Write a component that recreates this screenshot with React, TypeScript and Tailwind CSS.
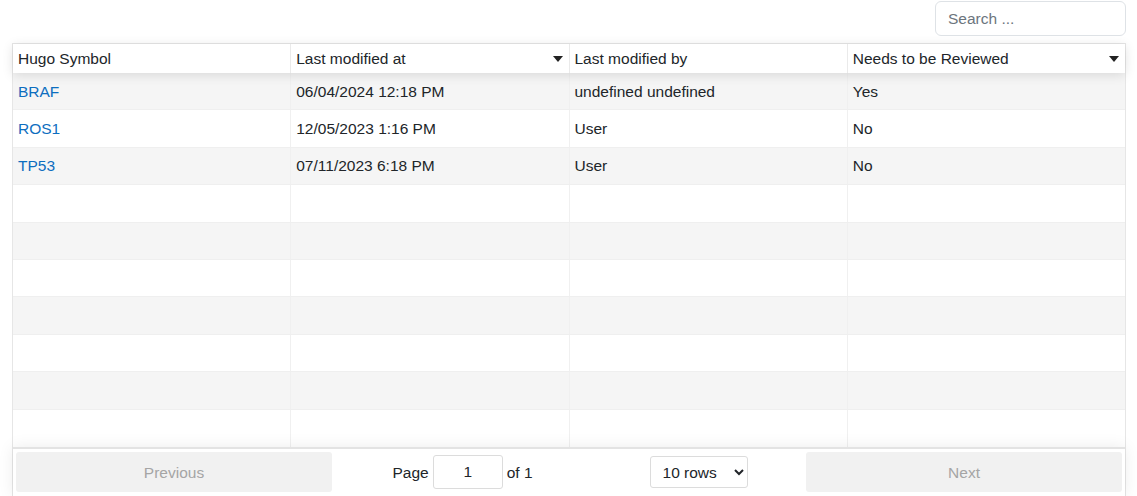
import React from 'react'

const rows = [
  { symbol: 'BRAF', at: '06/04/2024 12:18 PM', by: 'undefined undefined', review: 'Yes' },
  { symbol: 'ROS1', at: '12/05/2023 1:16 PM', by: 'User', review: 'No' },
  { symbol: 'TP53', at: '07/11/2023 6:18 PM', by: 'User', review: 'No' },
]

const columns = [
  { label: 'Hugo Symbol', sorted: false },
  { label: 'Last modified at', sorted: true },
  { label: 'Last modified by', sorted: false },
  { label: 'Needs to be Reviewed', sorted: true },
]

function Caret() {
  return (
    <svg width="10" height="6" viewBox="0 0 10 6" className="shrink-0">
      <path d="M0 0h10L5 6z" fill="#222" />
    </svg>
  )
}

export default function App() {
  const padded = Array.from({ length: 10 }, (_, i) => rows[i] ?? null)

  return (
    <div className="w-[1137px] h-[496px] bg-white text-[15.5px] text-[#212529] [font-family:'Liberation_Sans',Arial,sans-serif]">
      {/* search */}
      <div className="flex justify-end pr-[11px] pt-px h-[43px]">
        <input
          type="text"
          placeholder="Search ..."
          className="w-[191px] h-[35px] px-3 rounded-md border border-[#dee2e6] text-[15.5px] outline-none placeholder:text-[#6c757d]"
        />
      </div>

      {/* table */}
      <div className="mx-3 w-[1114px] border border-[#e6e6e6] flex flex-col">
        <div className="flex h-[29px] shadow-[0_2px_12px_rgba(0,0,0,0.12)] relative z-10 bg-white">
          {columns.map((c, i) => (
            <div
              key={c.label}
              className={`flex-1 flex items-center justify-between px-[5px] pr-[6px] pt-px ${i < 3 ? 'border-r border-[#eaeaea]' : ''}`}
            >
              <span>{c.label}</span>
              {c.sorted && <Caret />}
            </div>
          ))}
        </div>

        <div className="flex flex-col">
          {padded.map((r, idx) => (
            <div
              key={idx}
              className={`flex h-[37.4px] border-b border-[#efefef] last:border-b-0 ${idx % 2 === 0 ? 'bg-[#f5f5f5]' : 'bg-white'}`}
            >
              {[0, 1, 2, 3].map((ci) => (
                <div
                  key={ci}
                  className={`flex-1 flex items-center px-[5px] ${ci < 3 ? 'border-r border-[#f0f0f0]' : ''}`}
                >
                  {r && ci === 0 && <a className="text-[#0d6ebf] cursor-pointer">{r.symbol}</a>}
                  {r && ci === 1 && <span>{r.at}</span>}
                  {r && ci === 2 && <span>{r.by}</span>}
                  {r && ci === 3 && <span>{r.review}</span>}
                </div>
              ))}
            </div>
          ))}
        </div>

        {/* pagination */}
        <div className="flex items-center h-[49px] px-[3px] py-[4px] border-t-2 border-[#e3e3e3] shadow-[0_0_15px_rgba(0,0,0,0.08)]">
          <button disabled className="w-[316px] h-[40px] rounded-[3px] bg-[#f1f1f1] text-[#a5a5a5] text-[15.5px]">
            Previous
          </button>
          <div className="flex-1 flex items-center justify-around">
            <div className="flex items-center gap-[4px] ml-[2px]">
              <span>Page</span>
              <input
                readOnly
                value="1"
                className="w-[70px] h-[34px] border border-[#dcdcdc] rounded-[3px] text-center text-[15.5px] outline-none"
              />
              <span>of 1</span>
            </div>
            <select className="w-[98px] h-[32px] border border-[#dcdcdc] rounded-[3px] bg-white px-2 text-[15.5px]">
              <option>10 rows</option>
            </select>
          </div>
          <button disabled className="w-[316px] h-[40px] rounded-[3px] bg-[#f1f1f1] text-[#a5a5a5] text-[15.5px]">
            Next
          </button>
        </div>
      </div>
    </div>
  )
}
